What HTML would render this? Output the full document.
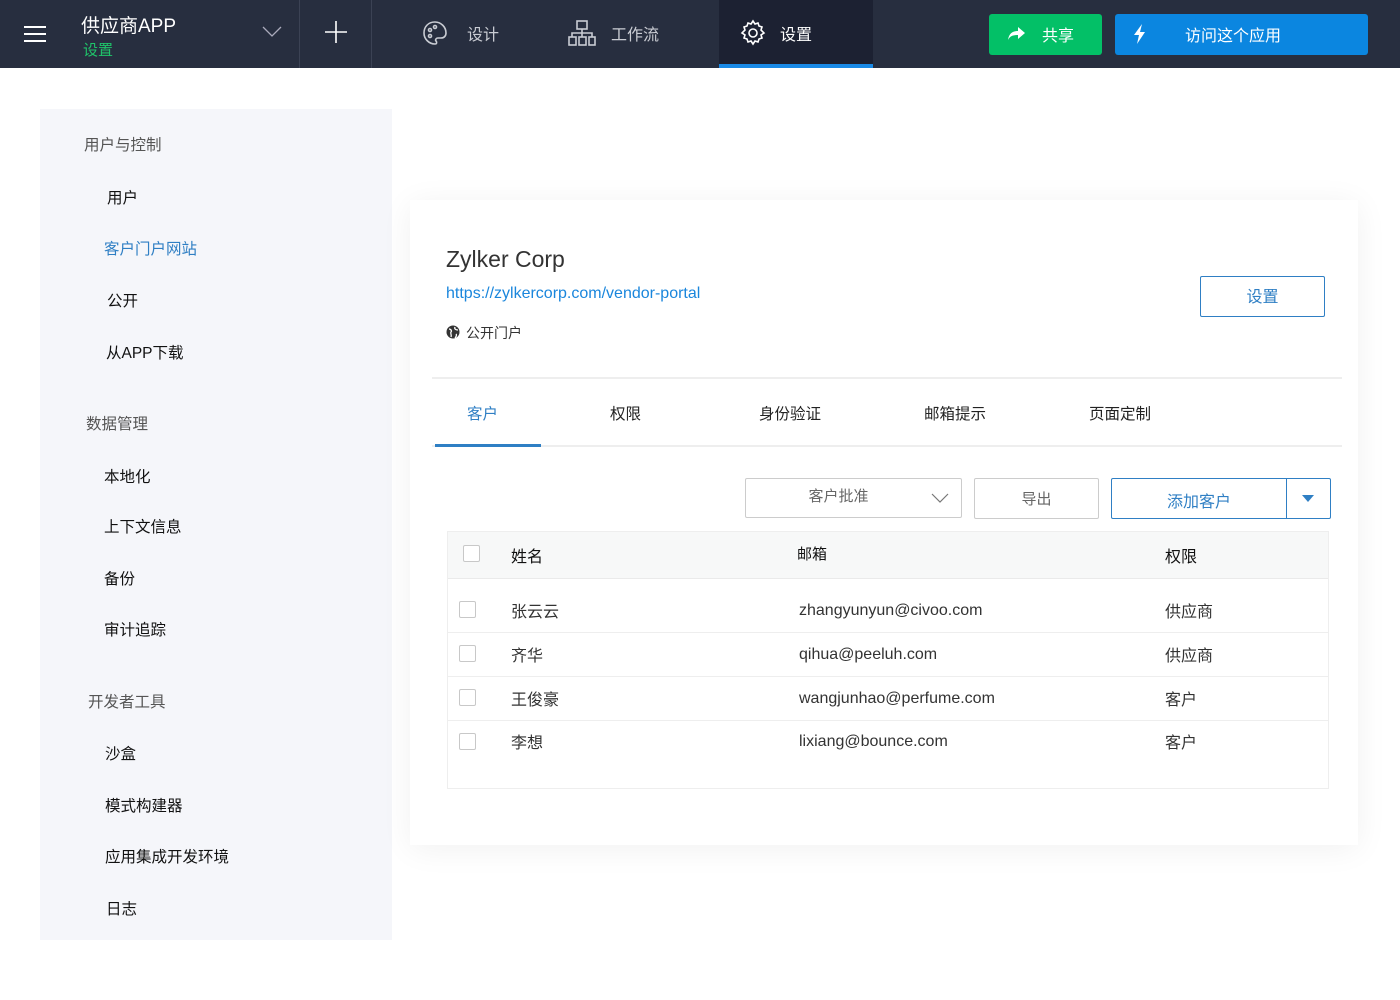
<!DOCTYPE html>
<html><head><meta charset="utf-8"><style>
*{margin:0;padding:0;box-sizing:border-box}
body{width:1400px;height:1000px;background:#fff;font-family:"Liberation Sans","Noto Sans CJK SC",sans-serif;position:relative;overflow:hidden;color:#222}
.a{position:absolute}
.nav{left:0;top:0;width:1400px;height:68px;background:#272e3f}
.sep{top:0;width:1px;height:68px;background:#3b4254}
.nt{color:#c9ccd3;font-size:16px}
.side{left:40px;top:109px;width:352px;height:831px;background:#f5f6fa}
.sh{color:#555;font-size:15.5px}
.si{color:#111;font-size:15.5px}
.card{left:410px;top:200px;width:948px;height:645px;background:#fff;box-shadow:0 4px 30px rgba(0,0,0,.06)}
.tab{font-size:15.5px;color:#222;top:402px}
.btn{border:1px solid #ccc;border-radius:2px;background:#fff;color:#666;font-size:15px;text-align:center}
.cb{width:17px;height:17px;border:1px solid #c8c8c8;border-radius:2px;background:#fff}
.td{font-size:16px;color:#333}
.rl{left:448px;width:880px;height:1px;background:#eee}
</style></head><body>
<div class="a nav"></div>
<div class="a" style="left:24px;top:26px;width:22px;height:2px;background:#fff;box-shadow:0 7px 0 #fff,0 14px 0 #fff"></div>
<div class="a" style="left:81px;top:11px;color:#fff;font-size:19px">供应商APP</div>
<div class="a" style="left:83px;top:39px;color:#1fc46a;font-size:15px">设置</div>
<svg class="a" style="left:262px;top:26px" width="20" height="12"><path d="M1 1L10 10L19 1" stroke="#aab" fill="none" stroke-width="1.3"/></svg>
<div class="a sep" style="left:299px"></div>
<svg class="a" style="left:324px;top:20px" width="24" height="24"><path d="M12 1V23M1 12H23" stroke="#fff" stroke-width="1.6"/></svg>
<div class="a sep" style="left:371px"></div>
<svg class="a" style="left:422px;top:20px" width="26" height="26" fill="none" stroke="#c9ccd3" stroke-width="1.6"><path d="M13 2C6 2 2 7 2 13s5 11 11 11c2 0 2-2 1-3s0-3 2-3h3c3 0 5-2 5-5C24 7 19 2 13 2z"/><circle cx="8" cy="10" r="1.5"/><circle cx="13" cy="7" r="1.5"/><circle cx="8" cy="16" r="1.5"/></svg>
<div class="a nt" style="left:467px;top:21px">设计</div>
<svg class="a" style="left:568px;top:20px" width="28" height="26" fill="none" stroke="#c9ccd3" stroke-width="1.6"><rect x="9" y="1" width="10" height="8"/><rect x="1" y="17" width="7" height="8"/><rect x="11" y="17" width="7" height="8"/><rect x="21" y="17" width="6" height="8"/><path d="M14 9v4M4 17v-4h20v4M14 13v4"/></svg>
<div class="a nt" style="left:611px;top:21px">工作流</div>
<div class="a" style="left:719px;top:0;width:154px;height:68px;background:#1c2132"></div>
<div class="a" style="left:719px;top:64px;width:154px;height:4px;background:#1a8ae6"></div>
<svg class="a" style="left:739px;top:19px" width="28" height="28" fill="none" stroke="#fff" stroke-width="1.6"><path d="M14 2l2 3 3-1 1 3 3 1-1 3 3 3-3 2 1 3-3 1-1 3-3-1-2 3-2-3-3 1-1-3-3-1 1-3-3-2 3-3-1-3 3-1 1-3 3 1z"/><circle cx="14" cy="14" r="4"/></svg>
<div class="a" style="left:780px;top:21px;color:#fff;font-size:16px">设置</div>
<div class="a" style="left:989px;top:14px;width:113px;height:41px;background:#03c067;border-radius:3px"></div>
<svg class="a" style="left:1006px;top:25px" width="20" height="16"><path d="M2 15C3 8 7 6 12 6V2l7 6-7 6V10C7 10 4 11 2 15z" fill="#fff"/></svg>
<div class="a" style="left:1042px;top:22px;color:#fff;font-size:16px">共享</div>
<div class="a" style="left:1115px;top:14px;width:253px;height:41px;background:#0b86e0;border-radius:3px"></div>
<svg class="a" style="left:1132px;top:23px" width="16" height="22"><path d="M10 1L2 12h5l-2 9 8-12H8z" fill="#fff"/></svg>
<div class="a" style="left:1185px;top:22px;color:#fff;font-size:16px">访问这个应用</div>

<div class="a side"></div>
<div class="a sh" style="left:84px;top:133px">用户与控制</div>
<div class="a si" style="left:107px;top:186px">用户</div>
<div class="a si" style="left:104px;top:237px;color:#2f7fc4">客户门户网站</div>
<div class="a si" style="left:107px;top:289px">公开</div>
<div class="a si" style="left:106px;top:341px">从APP下载</div>
<div class="a sh" style="left:86px;top:412px">数据管理</div>
<div class="a si" style="left:104px;top:465px">本地化</div>
<div class="a si" style="left:104px;top:515px">上下文信息</div>
<div class="a si" style="left:104px;top:567px">备份</div>
<div class="a si" style="left:104px;top:618px">审计追踪</div>
<div class="a sh" style="left:88px;top:690px">开发者工具</div>
<div class="a si" style="left:105px;top:742px">沙盒</div>
<div class="a si" style="left:105px;top:794px">模式构建器</div>
<div class="a si" style="left:105px;top:845px">应用集成开发环境</div>
<div class="a si" style="left:106px;top:897px">日志</div>

<div class="a card"></div>
<div class="a" style="left:446px;top:246px;font-size:23px;color:#333">Zylker Corp</div>
<div class="a" style="left:446px;top:285px;font-size:16px;color:#1a86dc">https://zylkercorp.com/vendor-portal</div>
<svg class="a" style="left:446px;top:325px" width="14" height="14"><circle cx="7" cy="7" r="6.5" fill="#333"/><path d="M3 4c2 0 3 2 2 3s1 3 0 5M9 2c-1 2 1 3 3 3M10 9c1 1 0 3-1 4" stroke="#fff" stroke-width="1.3" fill="none"/></svg>
<div class="a" style="left:466px;top:323px;font-size:14px;color:#333">公开门户</div>
<div class="a" style="left:1200px;top:276px;width:125px;height:41px;border:1px solid #2f7fc4;border-radius:2px;color:#2f7fc4;font-size:16px;text-align:center;line-height:42px">设置</div>
<div class="a" style="left:432px;top:377px;width:910px;height:2px;background:#eee"></div>
<div class="a tab" style="left:467px;color:#2f7fc4">客户</div>
<div class="a tab" style="left:610px">权限</div>
<div class="a tab" style="left:759px">身份验证</div>
<div class="a tab" style="left:924px">邮箱提示</div>
<div class="a tab" style="left:1089px">页面定制</div>
<div class="a" style="left:432px;top:445px;width:910px;height:2px;background:#eee"></div>
<div class="a" style="left:435px;top:444px;width:106px;height:3px;background:#2f7fc4"></div>

<div class="a btn" style="left:745px;top:478px;width:217px;height:40px;line-height:36px;padding-right:30px">客户批准</div>
<svg class="a" style="left:931px;top:493px" width="18" height="11"><path d="M1 1l8 8 8-8" stroke="#777" fill="none" stroke-width="1.2"/></svg>
<div class="a btn" style="left:974px;top:478px;width:125px;height:41px;line-height:41px">导出</div>
<div class="a" style="left:1111px;top:478px;width:220px;height:41px;border:1px solid #2f7fc4;border-radius:2px"></div>
<div class="a" style="left:1286px;top:479px;width:1px;height:39px;background:#2f7fc4"></div>
<div class="a" style="left:1111px;top:488px;width:176px;text-align:center;color:#2f7fc4;font-size:16px">添加客户</div>
<svg class="a" style="left:1302px;top:495px" width="12" height="8"><path d="M0 0h12L6 7z" fill="#2f7fc4"/></svg>

<div class="a" style="left:447px;top:531px;width:882px;height:258px;border:1px solid #eee"></div>
<div class="a" style="left:448px;top:532px;width:880px;height:47px;background:#f7f8f8;border-bottom:1px solid #eaeaea"></div>
<div class="a cb" style="left:463px;top:545px"></div>
<div class="a td" style="left:511px;top:543px;color:#111">姓名</div>
<div class="a td" style="left:797px;top:543px;color:#111;font-size:15px">邮箱</div>
<div class="a td" style="left:1165px;top:543px;color:#111">权限</div>

<div class="a cb" style="left:459px;top:601px"></div>
<div class="a td" style="left:511px;top:598px">张云云</div>
<div class="a td" style="left:799px;top:602px">zhangyunyun@civoo.com</div>
<div class="a td" style="left:1165px;top:598px">供应商</div>
<div class="a rl" style="top:632px"></div>
<div class="a cb" style="left:459px;top:645px"></div>
<div class="a td" style="left:511px;top:642px">齐华</div>
<div class="a td" style="left:799px;top:646px">qihua@peeluh.com</div>
<div class="a td" style="left:1165px;top:642px">供应商</div>
<div class="a rl" style="top:676px"></div>
<div class="a cb" style="left:459px;top:689px"></div>
<div class="a td" style="left:511px;top:686px">王俊豪</div>
<div class="a td" style="left:799px;top:690px">wangjunhao@perfume.com</div>
<div class="a td" style="left:1165px;top:686px">客户</div>
<div class="a rl" style="top:720px"></div>
<div class="a cb" style="left:459px;top:733px"></div>
<div class="a td" style="left:511px;top:729px">李想</div>
<div class="a td" style="left:799px;top:733px">lixiang@bounce.com</div>
<div class="a td" style="left:1165px;top:729px">客户</div>
</body></html>
